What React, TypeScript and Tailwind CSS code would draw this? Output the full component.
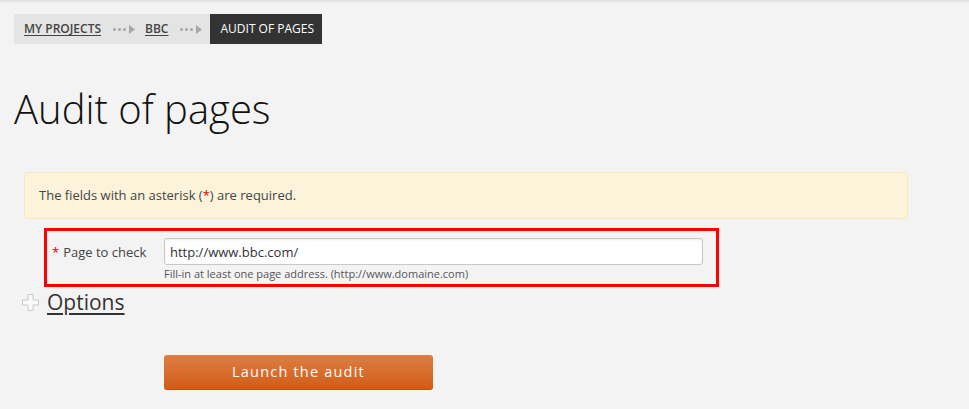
const Arrow = () => (
  <span className="flex items-center gap-[2px] text-[#9a9a9a]">
    <span className="h-[3px] w-[3px] rounded-full bg-[#a8a8a8]" />
    <span className="h-[3px] w-[3px] rounded-full bg-[#a8a8a8]" />
    <span className="h-[3px] w-[3px] rounded-full bg-[#a8a8a8]" />
    <svg width="6" height="9" viewBox="0 0 6 9" className="ml-[1px]">
      <path d="M0 0 L6 4.5 L0 9 Z" fill="#a8a8a8" />
    </svg>
  </span>
)

const PlusIcon = () => (
  <svg width="17" height="17" viewBox="0 0 17 17">
    <path
      d="M6 0.5 H11 V6 H16.5 V11 H11 V16.5 H6 V11 H0.5 V6 H6 Z"
      fill="#fafafa"
      stroke="#c8c8c8"
      strokeWidth="1"
    />
  </svg>
)

export default function App() {
  return (
    <div
      className="min-h-[409px] w-full bg-[#f3f3f3] text-[#333]"
      style={{ fontFamily: '"Open Sans", "Liberation Sans", sans-serif' }}
    >
      <div className="h-[3px] bg-gradient-to-b from-[#dcdcdc] to-[#f3f3f3]" />
      <div className="px-[14px] pt-[11px]">
        {/* breadcrumb */}
        <nav className="flex h-[30px] w-fit items-center bg-[#e4e4e4] text-[12px] font-semibold uppercase">
          <a href="#" className="ml-[10px] text-[#444] underline underline-offset-2">
            My projects
          </a>
          <span className="ml-[12px] mr-[10px]">
            <Arrow />
          </span>
          <a href="#" className="text-[#444] underline underline-offset-2">
            BBC
          </a>
          <span className="ml-[12px] mr-[8px]">
            <Arrow />
          </span>
          <span className="flex h-full items-center bg-[#333] pl-[10px] pr-[8px] font-medium text-white">
            Audit of pages
          </span>
        </nav>

        {/* title */}
        <h1 className="mt-[40px] text-[40px] font-light leading-[50px] text-[#111]">
          Audit of pages
        </h1>

        {/* notice */}
        <div className="ml-[10px] mt-[38px] flex h-[47px] w-[884px] items-center rounded-[3px] border border-[#f7e8bd] bg-[#fcf4da] px-[14px] text-[13px] text-[#444]">
          <p>
            The fields with an asterisk (<span className="text-[#d00]">*</span>) are required.
          </p>
        </div>

        {/* field */}
        <div className="ml-[30px] mt-[9px] flex h-[59px] w-[675px] border-[3px] border-[#ff0000] pl-[5px] pt-[7px]">
          <label className="w-[112px] pt-[5px] text-[13px] text-[#444]">
            <span className="mr-[4px] text-[#d00]">*</span>Page to check
          </label>
          <div className="flex flex-col">
            <input
              type="text"
              defaultValue="http://www.bbc.com/"
              className="h-[27px] w-[539px] rounded-[3px] border border-[#c8c8c8] bg-white px-[5px] text-[13px] text-[#333] shadow-[inset_0_1px_2px_rgba(0,0,0,0.08)] outline-none"
            />
            <span className="mt-[2px] text-[11px] leading-[14px] text-[#555]">
              Fill-in at least one page address. (http://www.domaine.com)
            </span>
          </div>
        </div>

        {/* options */}
        <div className="mt-[2px] flex items-center gap-[8px] pl-[8px]">
          <PlusIcon />
          <a href="#" className="text-[21px] leading-[26px] text-[#333] underline underline-offset-[3px]">
            Options
          </a>
        </div>

        {/* submit */}
        <button className="ml-[150px] mt-[40px] h-[35px] w-[269px] rounded-[3px] border-b border-[#b9500f] bg-gradient-to-b from-[#dd7e42] to-[#d25c12] text-[14.5px] font-medium tracking-[1.2px] text-white">
          Launch the audit
        </button>
      </div>
    </div>
  )
}
